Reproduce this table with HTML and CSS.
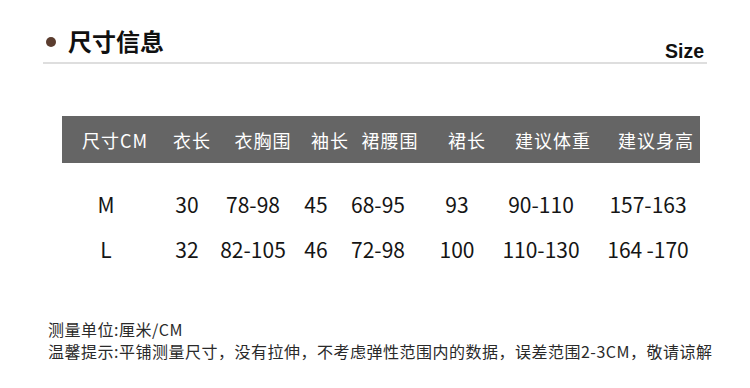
FILE: index.html
```html
<!DOCTYPE html>
<html lang="zh-CN">
<head>
<meta charset="utf-8">
<link rel="stylesheet" href="styles.css">
</head>
<body>
<div class="page">
  <div class="head">
    <span class="dot"></span>
    <span class="title">尺寸信息</span>
    <span class="size">Size</span>
  </div>

  <div class="table">
    <div class="hrow">
      <span class="cell">尺寸CM</span>
      <span class="cell">衣长</span>
      <span class="cell">衣胸围</span>
      <span class="cell">袖长</span>
      <span class="cell">裙腰围</span>
      <span class="cell">裙长</span>
      <span class="cell">建议体重</span>
      <span class="cell">建议身高</span>
    </div>
    <div class="drow">
      <span class="cell">M</span>
      <span class="cell">30</span>
      <span class="cell">78-98</span>
      <span class="cell">45</span>
      <span class="cell">68-95</span>
      <span class="cell">93</span>
      <span class="cell">90-110</span>
      <span class="cell">157-163</span>
    </div>
    <div class="drow">
      <span class="cell">L</span>
      <span class="cell">32</span>
      <span class="cell">82-105</span>
      <span class="cell">46</span>
      <span class="cell">72-98</span>
      <span class="cell">100</span>
      <span class="cell">110-130</span>
      <span class="cell">164&#8201;-170</span>
    </div>
  </div>

  <div class="notes">
    <p>测量单位:厘米/CM</p>
    <p>温馨提示:平铺测量尺寸，没有拉伸，不考虑弹性范围内的数据，误差范围2-3CM，敬请谅解</p>
  </div>
</div>
</body>
</html>
```

FILE: styles.css
```css
* { box-sizing: border-box; }
html, body { margin: 0; padding: 0; background: #fff; }
body {
  width: 750px;
  height: 388px;
  overflow: hidden;
  font-family: "Noto Sans CJK SC", "Noto Sans", sans-serif;
  color: #1a1a1a;
}
.page { width: 750px; }

.head {
  margin: 0 43px;
  height: 64px;
  padding: 29px 3px 0 3px;
  border-bottom: 2px solid #dedede;
  display: flex;
  align-items: flex-start;
}
.dot {
  width: 10px;
  height: 10px;
  border-radius: 50%;
  background: #5b3d2f;
  margin-top: 8px;
  flex: none;
}
.title {
  margin-left: 12px;
  font-size: 24px;
  line-height: 24px;
  font-weight: 700;
  color: #111;
}
.size {
  margin-left: auto;
  margin-top: 13px;
  font-family: "Liberation Sans", Arial, sans-serif;
  font-weight: 700;
  font-size: 19.5px;
  line-height: 18px;
  color: #111;
}

.table {
  margin: 52px 50px 0 62px;
}
.hrow {
  width: 638px;
  height: 47px;
  background: #656565;
  display: grid;
  grid-template-columns: 106px 48px 94px 40px 80px 74px 98px 108px;
  align-items: center;
  color: #fff;
  font-size: 18px;
  letter-spacing: 1px;
  font-weight: 400;
}
.drow {
  display: grid;
  grid-template-columns: 88px 74px 58px 68px 56px 102px 66px 148px;
  height: 45px;
  align-items: center;
  font-size: 21px;
  color: #151515;
}
.hrow + .drow { margin-top: 18px; }
.cell {
  display: flex;
  justify-content: center;
  white-space: nowrap;
}

.notes {
  margin-top: 47px;
  padding-left: 48px;
  font-size: 16px;
  line-height: 22px;
  letter-spacing: 0.5px;
  color: #2a2a2a;
}
.notes p { margin: 0; white-space: nowrap; }
```
